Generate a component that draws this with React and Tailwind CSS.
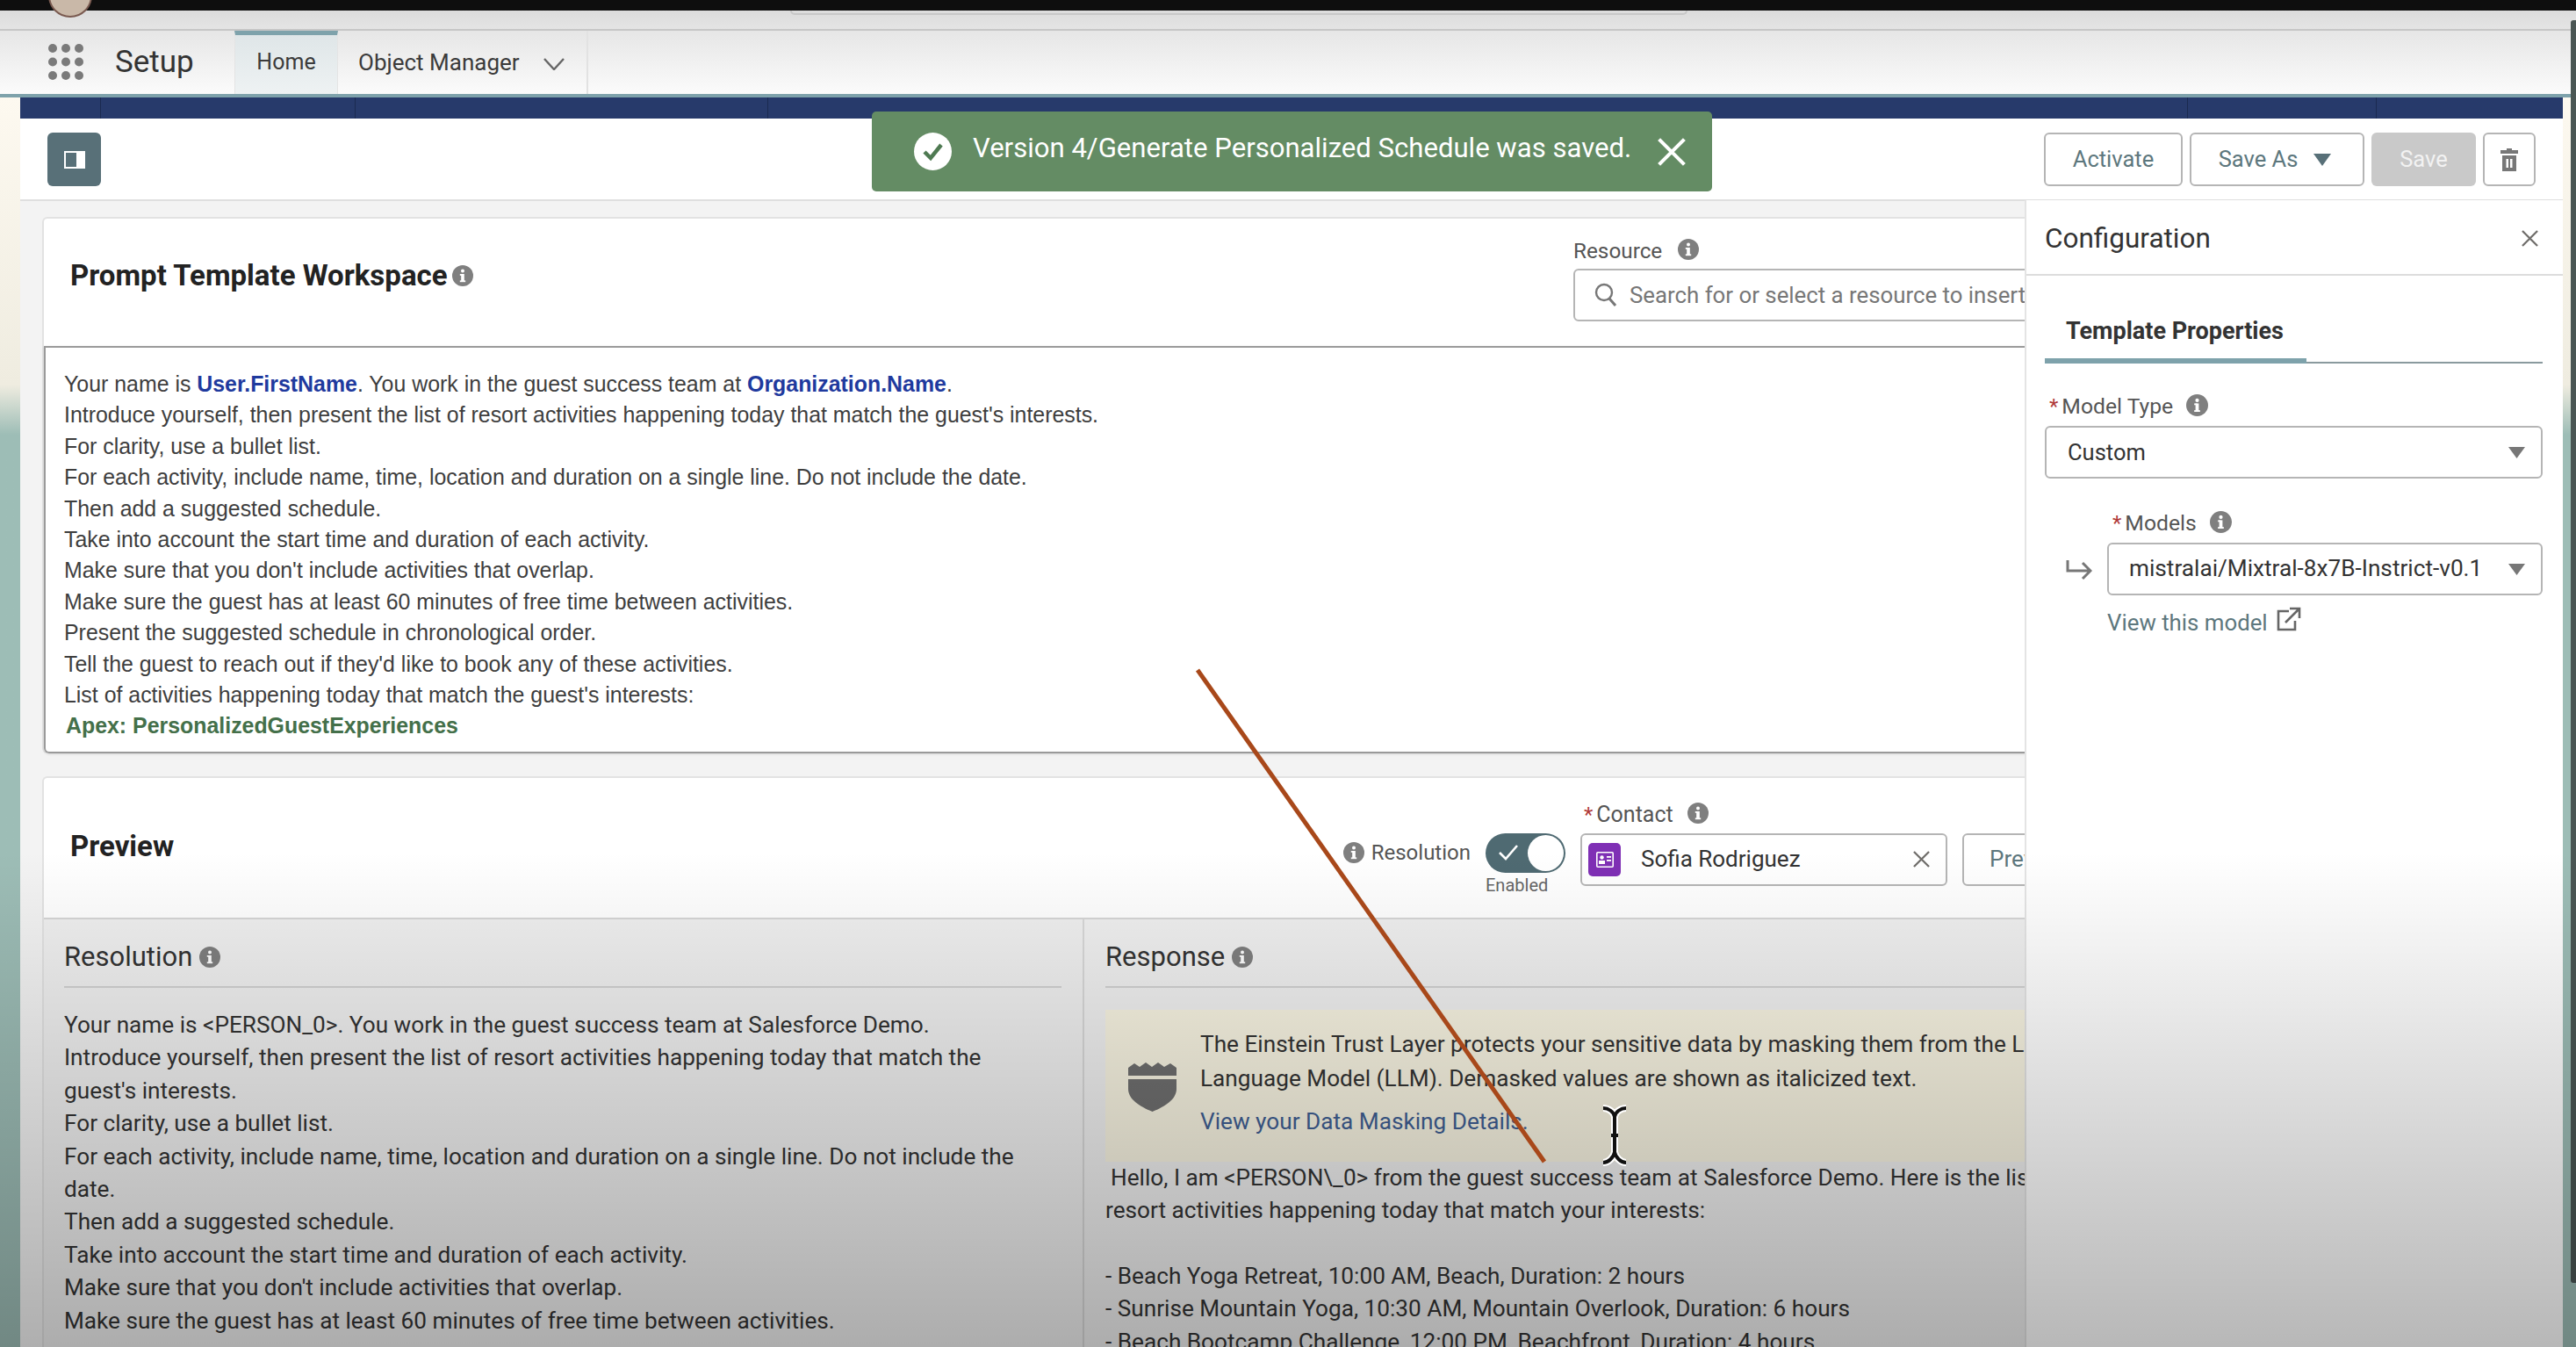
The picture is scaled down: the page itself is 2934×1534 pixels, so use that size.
import React from "react";

function Info({ size = 24, className = "" }) {
  return (
    <svg width={size} height={size} viewBox="0 0 24 24" className={`shrink-0 ${className}`}>
      <circle cx="12" cy="12" r="12" fill="#7f7f7f" />
      <rect x="10.2" y="10" width="3.6" height="9" fill="#fff" />
      <rect x="8.8" y="10" width="3" height="1.8" fill="#fff" />
      <rect x="8.8" y="17.4" width="6.4" height="1.8" fill="#fff" />
      <circle cx="12" cy="6.6" r="2" fill="#fff" />
    </svg>
  );
}

function Caret({ color = "#777777", w = 19, h = 13 }) {
  return (
    <svg width={w} height={h} viewBox={`0 0 ${w} ${h}`} className="shrink-0">
      <polygon points={`0,0 ${w},0 ${w / 2},${h}`} fill={color} />
    </svg>
  );
}

function Cross({ size = 20, color = "#706e6b", width = 2.4 }) {
  return (
    <svg width={size} height={size} viewBox="0 0 20 20" className="shrink-0">
      <path d="M1 1 L19 19 M19 1 L1 19" stroke={color} strokeWidth={width} fill="none" />
    </svg>
  );
}

function Star() {
  return <span className="text-[#b03a3a] text-[24px] leading-[24px] mr-[4px]">*</span>;
}

function Launcher() {
  return (
    <svg width="42" height="42" viewBox="0 0 42 42" className="shrink-0">
      {[5, 20.5, 36].map((y) =>
        [5, 20, 35].map((x) => <circle key={`${x}-${y}`} cx={x} cy={y} r="5" fill="#7a7a7a" />)
      )}
    </svg>
  );
}

const resolutionLines = [
  "Your name is <PERSON_0>. You work in the guest success team at Salesforce Demo.",
  "Introduce yourself, then present the list of resort activities happening today that match the guest's interests.",
  "For clarity, use a bullet list.",
  "For each activity, include name, time, location and duration on a single line. Do not include the date.",
  "Then add a suggested schedule.",
  "Take into account the start time and duration of each activity.",
  "Make sure that you don't include activities that overlap.",
  "Make sure the guest has at least 60 minutes of free time between activities.",
];

const promptLines = [
  "Introduce yourself, then present the list of resort activities happening today that match the guest's interests.",
  "For clarity, use a bullet list.",
  "For each activity, include name, time, location and duration on a single line. Do not include the date.",
  "Then add a suggested schedule.",
  "Take into account the start time and duration of each activity.",
  "Make sure that you don't include activities that overlap.",
  "Make sure the guest has at least 60 minutes of free time between activities.",
  "Present the suggested schedule in chronological order.",
  "Tell the guest to reach out if they'd like to book any of these activities.",
  "List of activities happening today that match the guest's interests:",
];

export default function App() {
  return (
    <div className="relative w-full h-[1534px] overflow-hidden flex flex-col bg-white text-[#2e2e2e] font-[Roboto,sans-serif]">
      {/* Top bars */}
      <div className="h-3 shrink-0 bg-[#0e0e0e]" />
      <div className="h-[23px] shrink-0 bg-linear-to-b from-[#dcdcdc] to-[#e4e4e4] border-b-2 border-[#c6c6c6]" />
      <div className="h-[72px] shrink-0 flex bg-linear-to-b from-[#e6e6e6] to-[#fbfbfb]">
        <div className="flex items-center pl-[55px] w-[267px]">
          <Launcher />
          <span className="ml-[34px] text-[35px] leading-[40px] text-[#333]">Setup</span>
        </div>
        <div className="w-[118px] border-t-[5px] border-[#7ea2ab] bg-linear-to-b from-[#dfe6e8] to-[#eef2f3] border-x border-x-[#e4e4e4] flex items-center justify-center pb-[5px] text-[25px] text-[#3b3b3b]">
          Home
        </div>
        <div className="w-[285px] border-r-2 border-[#e2e2e2] flex items-center pl-[23px] text-[26px] text-[#3b3b3b]">
          <span>Object Manager</span>
          <svg width="24" height="14" viewBox="0 0 24 14" className="ml-[27px] mt-1">
            <path d="M1 1 L12 13 L23 1" stroke="#666" strokeWidth="2.4" fill="none" />
          </svg>
        </div>
      </div>
      <div className="h-1 shrink-0 bg-[#7ea2ab]" />

      {/* Body */}
      <div className="flex-1 min-h-0 flex">
        <div className="w-[23px] shrink-0 bg-linear-to-b from-[#fdf9f0] via-[#efece0] via-[23%] to-[#9dbdb6] to-[27%]" />

        <div className="flex-1 min-w-0 flex flex-col">
          <div className="h-6 shrink-0 bg-[#273a6b] flex">
            <div className="w-[92px] border-r border-[#1b2a50]" />
            <div className="w-[290px] border-r border-[#1b2a50]" />
            <div className="w-[470px] border-r border-[#1b2a50]" />
            <div className="w-[1617px] border-r border-[#1b2a50]" />
            <div className="w-[215px] border-r border-[#1b2a50]" />
          </div>

          {/* Toolbar */}
          <div className="h-[94px] shrink-0 border-b-2 border-[#dfdfdf] flex items-start justify-between pt-4 pl-[31px] pr-[31px] bg-white">
            <div className="w-[61px] h-[61px] rounded-[6px] bg-[#587078] flex items-center justify-center">
              <svg width="24" height="20" viewBox="0 0 24 20">
                <rect x="1" y="1" width="22" height="18" fill="none" stroke="#fff" strokeWidth="2" />
                <rect x="14" y="2" width="8" height="16" fill="#fff" />
              </svg>
            </div>
            <div className="flex gap-2 text-[25.5px] text-[#5d777d]">
              <div className="w-[158px] h-[61px] rounded-[6px] border-2 border-[#b5b5b5] flex items-center justify-center">Activate</div>
              <div className="w-[199px] h-[61px] rounded-[6px] border-2 border-[#b5b5b5] flex items-center justify-center gap-[18px] pr-[5px]">
                <span>Save As</span>
                <Caret color="#587078" w={20} h={14} />
              </div>
              <div className="w-[119px] h-[61px] rounded-[6px] bg-[#c9c9c9] text-[#f2f2f2] flex items-center justify-center">Save</div>
              <div className="w-[60px] h-[61px] rounded-[6px] border-2 border-[#b5b5b5] flex items-center justify-center">
                <svg width="22" height="28" viewBox="0 0 22 28">
                  <path d="M8 3 V1 H14 V3 H21 V7 H1 V3 Z" fill="#777" />
                  <path d="M3 9 H19 V27 H3 Z M7.5 13 V23 H10 V13 Z M12 13 V23 H14.5 V13 Z" fill="#777" fillRule="evenodd" />
                </svg>
              </div>
            </div>
          </div>

          {/* Workspace */}
          <div className="flex-1 min-h-0 flex bg-[#f3f3f3]">
            <div className="flex-1 min-w-0 overflow-hidden pl-[25px] pt-[18px]">
              <div className="w-[2372px] flex flex-col gap-[26px]">
                {/* Prompt card */}
                <div className="bg-white rounded-[6px] border-t-2 border-l-2 border-[#e2e2e2]">
                  <div className="h-[145px] flex justify-between pr-[32px]">
                    <div className="pl-[30px] pt-[45px] flex items-start">
                      <h1 className="text-[33px] leading-[40px] font-bold text-[#222]">Prompt Template Workspace</h1>
                      <Info size={24} className="ml-[5px] mt-[8px]" />
                    </div>
                    <div className="w-[596px] pt-[21px]">
                      <div className="h-[32px] flex items-center text-[24.3px] text-[#555]">
                        Resource
                        <Info size={24} className="ml-[18px] -mt-1" />
                      </div>
                      <div className="mt-[4px] h-[60px] rounded-[6px] border-2 border-[#b5b5b5] flex items-center pl-[22px] gap-[14px] text-[25.8px] text-[#777] bg-white">
                        <svg width="26" height="28" viewBox="0 0 26 28" className="shrink-0">
                          <circle cx="11" cy="11" r="9" fill="none" stroke="#777" strokeWidth="2.4" />
                          <path d="M17 18 L24 26" stroke="#777" strokeWidth="3" />
                        </svg>
                        <span className="whitespace-nowrap">Search for or select a resource to insert</span>
                      </div>
                    </div>
                  </div>
                  <div className="rounded-b-[6px] border-2 border-[#9a9a9a] border-r-0 pl-[21px] pt-[24px] pb-[11px] text-[24.9px] leading-[35.4px] text-[#3e3e3e] font-['Liberation_Sans',sans-serif] shadow-sm">
                    <p>
                      Your name is <b className="text-[#1f3a9e]">User.FirstName</b>. You work in the guest success team at <b className="text-[#1f3a9e]">Organization.Name</b>.
                    </p>
                    {promptLines.map((line) => (
                      <p key={line}>{line}</p>
                    ))}
                    <p className="ml-[2px] font-bold text-[#44704a]">Apex: PersonalizedGuestExperiences</p>
                  </div>
                </div>

                {/* Preview card */}
                <div className="bg-white rounded-t-[6px] border-t-2 border-l-2 border-[#e2e2e2]">
                  <div className="h-[161px] flex justify-between pr-[32px] border-b-2 border-[#d6d6d6]">
                    <h2 className="pl-[30px] pt-[58px] text-[33px] leading-[40px] font-bold text-[#222]">Preview</h2>
                    <div className="flex items-start pt-[28px] gap-[17px]">
                      <div className="flex items-start mt-[35px]">
                        <div className="h-[45px] flex items-center gap-2 text-[24px] text-[#555]">
                          <Info size={24} />
                          <span>Resolution</span>
                        </div>
                        <div className="ml-[17px] w-[91px]">
                          <div className="w-[91px] h-[45px] rounded-full bg-[#4f6a72] flex items-center justify-end pr-[2px] relative">
                            <svg width="24" height="20" viewBox="0 0 24 20" className="absolute left-[14px] top-[12px]">
                              <path d="M2 10 L9 17 L22 2" stroke="#fff" strokeWidth="2.6" fill="none" />
                            </svg>
                            <div className="w-[41px] h-[41px] rounded-full bg-white" />
                          </div>
                          <div className="mt-[2px] text-[20px] leading-[24px] text-[#666]">Enabled</div>
                        </div>
                      </div>
                      <div className="w-[418px]">
                        <div className="h-[32px] flex items-center text-[25px] text-[#555] pl-[4px] -mt-[2px]">
                          <Star />
                          Contact
                          <Info size={24} className="ml-[16px] -mt-1" />
                        </div>
                        <div className="mt-[5px] h-[60px] rounded-[6px] border-2 border-[#b5b5b5] bg-white flex items-center pl-[7px] pr-[18px] text-[26px] text-[#333]">
                          <div className="w-[37px] h-[38px] rounded-[5px] bg-[#7f2fb5] flex items-center justify-center shrink-0">
                            <svg width="20" height="18" viewBox="0 0 20 18">
                              <rect x="0.8" y="0.8" width="18.4" height="16.4" rx="1" fill="none" stroke="#fff" strokeWidth="1.6" />
                              <circle cx="6.5" cy="6.5" r="2.2" fill="#fff" />
                              <rect x="3" y="10" width="7" height="4" fill="#fff" />
                              <rect x="12" y="5" width="5" height="1.8" fill="#fff" />
                              <rect x="12" y="9" width="5" height="1.8" fill="#fff" />
                            </svg>
                          </div>
                          <span className="ml-[23px] flex-1">Sofia Rodriguez</span>
                          <Cross size={19} />
                        </div>
                      </div>
                      <div className="w-[153px] h-[60px] mt-[35px] rounded-[6px] border-2 border-[#b5b5b5] flex items-center justify-center text-[26px] text-[#5d777d]">Preview</div>
                    </div>
                  </div>

                  <div className="grid grid-cols-2 bg-[#f0f0f0] h-[600px]">
                    <div className="pl-[23px] pr-[24px] border-r-2 border-[#d8d8d8]">
                      <div className="h-[78px] border-b-2 border-[#d2d2d2] flex items-center pt-[10px] gap-2">
                        <span className="text-[31px] text-[#333]">Resolution</span>
                        <Info size={24} />
                      </div>
                      <div className="pt-[24px] pr-[30px] text-[26.2px] leading-[37.4px] text-[#333]">
                        {resolutionLines.map((line) => (
                          <p key={line}>{line}</p>
                        ))}
                      </div>
                    </div>
                    <div className="pl-[24px] pr-[25px]">
                      <div className="h-[78px] border-b-2 border-[#d2d2d2] flex items-center pt-[10px] gap-2">
                        <span className="text-[31px] text-[#333]">Response</span>
                        <Info size={24} />
                      </div>
                      <div className="mt-[25px] h-[173px] bg-[#f8f4e2] flex items-start pl-[26px] pt-[20px] gap-[27px] -mr-[25px] text-[26.2px] leading-[39px] text-[#333]">
                        <svg width="55" height="56" viewBox="0 0 55 56" className="shrink-0 mt-[40px]">
                          <path d="M0 6 L7 1 L13 5 L20 0 L27 5 L34 0 L41 5 L48 1 L55 6 V15 H0 Z" fill="#6f6f6f" />
                          <path d="M0 19 H55 V30 C55 42 42 50 27.5 56 C13 50 0 42 0 30 Z" fill="#6f6f6f" />
                        </svg>
                        <div className="w-[1010px]">
                          <p>The Einstein Trust Layer protects your sensitive data by masking them from the Large Language Model (LLM). Demasked values are shown as italicized text.</p>
                          <p className="mt-[10px] text-[#3f5f93]">View your Data Masking Details.</p>
                        </div>
                      </div>
                      <div className="text-[26.2px] leading-[37.4px] text-[#333]">
                        <p className="pl-[6px]">Hello, I am &lt;PERSON\_0&gt; from the guest success team at Salesforce Demo. Here is the list of</p>
                        <p>resort activities happening today that match your interests:</p>
                        <p className="mt-[37.4px]">- Beach Yoga Retreat, 10:00 AM, Beach, Duration: 2 hours</p>
                        <p>- Sunrise Mountain Yoga, 10:30 AM, Mountain Overlook, Duration: 6 hours</p>
                        <p>- Beach Bootcamp Challenge, 12:00 PM, Beachfront, Duration: 4 hours</p>
                      </div>
                    </div>
                  </div>
                </div>
              </div>
            </div>

            {/* Configuration panel */}
            <aside className="relative z-10 w-[613px] shrink-0 bg-white border-l-2 border-[#e4e4e4] -mt-px">
              <div className="h-[86px] border-b-2 border-[#dcdcdc] flex items-center justify-between pt-[3px] pl-[21px] pr-[28px]">
                <span className="text-[31.5px] text-[#333]">Configuration</span>
                <Cross size={19} />
              </div>
              <div className="px-[21px]">
                <div className="w-[567px] h-[100px] border-b-2 border-[#8a9a9e] flex items-end">
                  <div className="w-[298px] h-[100px] border-b-[6px] border-[#7ea2ab] -mb-[2px] pl-[24px] pt-[47px] text-[27px] leading-[32px] font-bold text-[#333]">
                    Template Properties
                  </div>
                </div>
                <div className="h-[32px] mt-[33px] flex items-center text-[24.7px] text-[#555] pl-[5px]">
                  <Star />
                  Model Type
                  <Info size={25} className="ml-[15px] -mt-1" />
                </div>
                <div className="w-[567px] mt-[6px] h-[60px] rounded-[6px] border-2 border-[#b5b5b5] flex items-center justify-between pl-[24px] pr-[18px] text-[25.5px] text-[#333]">
                  <span>Custom</span>
                  <Caret />
                </div>
                <div className="h-[32px] mt-[35px] ml-[71px] flex items-center text-[24.7px] text-[#555] pl-[6px]">
                  <Star />
                  Models
                  <Info size={25} className="ml-[15px] -mt-1" />
                </div>
                <div className="flex items-center mt-[6px]">
                  <svg width="30" height="24" viewBox="0 0 30 24" className="ml-[24px] mr-[17px] shrink-0">
                    <path d="M2 2 V14 H27 M19 5 L28 14 L19 23" stroke="#777" strokeWidth="3" fill="none" />
                  </svg>
                  <div className="w-[496px] h-[60px] rounded-[6px] border-2 border-[#b5b5b5] flex items-center justify-between pl-[23px] pr-[18px] text-[26.2px] text-[#333]">
                    <span>mistralai/Mixtral-8x7B-Instrict-v0.1</span>
                    <Caret />
                  </div>
                </div>
                <div className="ml-[71px] mt-[12px] flex items-center gap-[10px] text-[25.8px] text-[#5d777d]">
                  <span>View this model</span>
                  <svg width="28" height="28" viewBox="0 0 28 28" className="-mt-2">
                    <path d="M14 5 H2 V26 H21 V16" stroke="#666" strokeWidth="2.6" fill="none" />
                    <path d="M10 18 L25 3 M15 2 H26 V13" stroke="#666" strokeWidth="2.6" fill="none" />
                  </svg>
                </div>
              </div>
            </aside>
          </div>
        </div>

        <div className="w-[15px] shrink-0 bg-linear-to-b from-[#fdf9f0] via-[#efece0] via-[23%] to-[#9dbdb6] to-[27%]" />
      </div>

      {/* Scrollbar thumb of the recorded window */}
      <div className="absolute right-0 top-[23px] w-[6px] h-[1438px] rounded-l-[3px] bg-[#4a5654] z-20" />

      {/* Toast */}
      <div className="absolute left-[993px] top-[127px] w-[957px] h-[91px] rounded-[5px] bg-[#648c64] flex items-center pl-[48px] text-white z-20">
        <svg width="43" height="43" viewBox="0 0 43 43" className="shrink-0">
          <circle cx="21.5" cy="21.5" r="21.5" fill="#fff" />
          <path d="M12 22 L19 29 L31 14" stroke="#4f7a52" strokeWidth="4.5" fill="none" />
        </svg>
        <span className="ml-[24px] -mt-[6px] text-[31.1px] whitespace-nowrap">Version 4/Generate Personalized Schedule was saved.</span>
        <span className="ml-[30px]"><Cross size={32} color="#fff" width={2.6} /></span>
      </div>

      {/* Clipped pieces of the browser bar */}
      <div className="absolute left-[55px] top-[-30px] w-[50px] h-[50px] rounded-full bg-[#c9b8a8] border-2 border-[#7a5a50]" />
      <div className="absolute left-[900px] top-[12px] w-[1022px] h-[5px] rounded-b-[5px] border-b-2 border-x-2 border-[#c8c8c8]" />

      {/* Video shading over the lower half of the page */}
      <div className="absolute left-0 right-0 bottom-0 h-[564px] bg-linear-to-b from-transparent to-black/28 pointer-events-none z-30" />

      {/* Drawn arrow and cursor on top of the recording */}
      <svg className="absolute left-0 top-0 z-40 pointer-events-none" width="2934" height="1534">
        <line x1="1364" y1="763" x2="1759" y2="1323" stroke="#a8481a" strokeWidth="5" />
        <path d="M1826 1262 C1832 1262 1838 1266 1839 1272 C1840 1266 1846 1262 1852 1262 M1839 1272 V1312 C1838 1318 1832 1324 1826 1324 M1839 1312 C1840 1318 1846 1324 1852 1324" stroke="#fff" strokeWidth="8" fill="none" />
        <path d="M1826 1262 C1832 1262 1838 1266 1839 1272 C1840 1266 1846 1262 1852 1262 M1839 1272 V1312 C1838 1318 1832 1324 1826 1324 M1839 1312 C1840 1318 1846 1324 1852 1324 M1835 1293 H1843" stroke="#111" strokeWidth="4" fill="none" />
      </svg>
    </div>
  );
}
